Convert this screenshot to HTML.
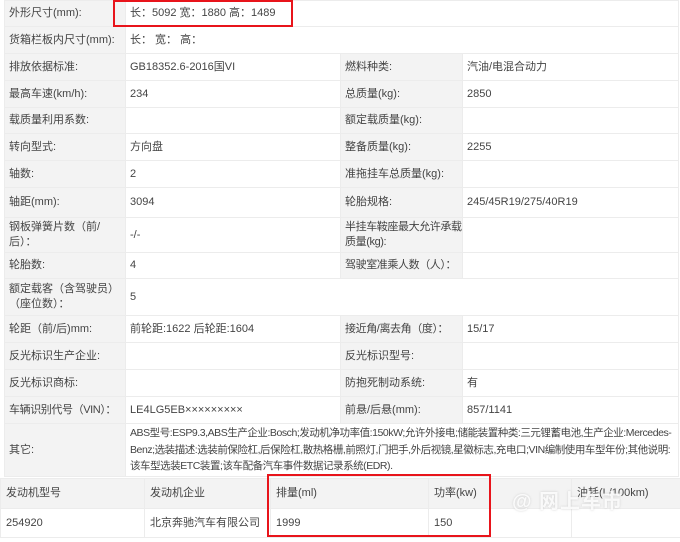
<!DOCTYPE html>
<html><head><meta charset="utf-8"><style>
*{margin:0;padding:0;box-sizing:border-box}
body{width:680px;height:542px;background:#fff;position:relative;overflow:hidden;font-family:"Liberation Sans","Noto Sans CJK SC",sans-serif;font-size:11px;color:#444}
table{border-collapse:collapse;table-layout:fixed;position:absolute}
td{border:1px solid #ececec;padding:0 4px;vertical-align:middle;line-height:15px;overflow:hidden;white-space:nowrap}
td.l{background:#f3f3f3}
.nw{letter-spacing:-0.4px}
#m{left:4px;top:0;width:674px}
#b{left:0;top:478px;width:680px}
#b td{padding-left:5px}
.rb{position:absolute;border:2.5px solid #e8141b}
.wm{position:absolute;left:512px;top:485px;font-size:20px;color:rgba(255,255,255,.85);font-weight:bold;letter-spacing:1px;text-shadow:0 0 2px rgba(180,180,180,.6)}
.oth{font-size:10.5px;line-height:16.5px;letter-spacing:-0.45px}
</style></head><body>
<table id="m">
<colgroup><col style="width:121px"><col style="width:215px"><col style="width:122px"><col style="width:216px"></colgroup>
<tr style="height:26px"><td class="l">外形尺寸(mm):</td><td colspan="3">长：5092 宽：1880 高：1489</td></tr>
<tr style="height:27px"><td class="l">货箱栏板内尺寸(mm):</td><td colspan="3">长：&nbsp;宽：&nbsp;高：</td></tr>
<tr style="height:27px"><td class="l">排放依据标准:</td><td>GB18352.6-2016国VI</td><td class="l">燃料种类:</td><td>汽油/电混合动力</td></tr>
<tr style="height:27px"><td class="l">最高车速(km/h):</td><td>234</td><td class="l">总质量(kg):</td><td>2850</td></tr>
<tr style="height:26px"><td class="l">载质量利用系数:</td><td></td><td class="l">额定载质量(kg):</td><td></td></tr>
<tr style="height:27px"><td class="l">转向型式:</td><td>方向盘</td><td class="l">整备质量(kg):</td><td>2255</td></tr>
<tr style="height:27px"><td class="l">轴数:</td><td>2</td><td class="l">准拖挂车总质量(kg):</td><td></td></tr>
<tr style="height:30px"><td class="l">轴距(mm):</td><td>3094</td><td class="l">轮胎规格:</td><td>245/45R19/275/40R19</td></tr>
<tr style="height:35px"><td class="l">钢板弹簧片数（前/<br>后）：</td><td>-/-</td><td class="l nw">半挂车鞍座最大允许承载<br>质量(kg):</td><td></td></tr>
<tr style="height:26px"><td class="l">轮胎数:</td><td>4</td><td class="l nw">驾驶室准乘人数（人）：</td><td></td></tr>
<tr style="height:37px"><td class="l">额定载客（含驾驶员）<br>（座位数）：</td><td colspan="3">5</td></tr>
<tr style="height:27px"><td class="l">轮距（前/后)mm:</td><td>前轮距:1622 后轮距:1604</td><td class="l nw">接近角/离去角（度）：</td><td>15/17</td></tr>
<tr style="height:27px"><td class="l">反光标识生产企业:</td><td></td><td class="l">反光标识型号:</td><td></td></tr>
<tr style="height:27px"><td class="l">反光标识商标:</td><td></td><td class="l">防抱死制动系统:</td><td>有</td></tr>
<tr style="height:27px"><td class="l nw">车辆识别代号（VIN）：</td><td>LE4LG5EB×××××××××</td><td class="l">前悬/后悬(mm):</td><td>857/1141</td></tr>
<tr style="height:53px"><td class="l">其它:</td><td colspan="3" class="oth">ABS型号:ESP9.3,ABS生产企业:Bosch;发动机净功率值:150kW;允许外接电;储能装置种类:三元锂蓄电池,生产企业:Mercedes-<br>Benz;选装描述:选装前保险杠,后保险杠,散热格栅,前照灯,门把手,外后视镜,星徽标志,充电口;VIN编制使用车型年份;其他说明:<br>该车型选装ETC装置;该车配备汽车事件数据记录系统(EDR).</td></tr>
</table>
<table id="b">
<colgroup><col style="width:144px"><col style="width:126px"><col style="width:158px"><col style="width:143px"><col style="width:109px"></colgroup>
<tr style="height:30px"><td class="l">发动机型号</td><td class="l">发动机企业</td><td class="l">排量(ml)</td><td class="l">功率(kw)</td><td class="l">油耗(L/100km)</td></tr>
<tr style="height:29px"><td>254920</td><td>北京奔驰汽车有限公司</td><td>1999</td><td>150</td><td></td></tr>
</table>
<div class="wm">@ 网上车市</div>
<div class="rb" style="left:113px;top:0;width:180px;height:27px"></div>
<div class="rb" style="left:267px;top:474px;width:224px;height:63px"></div>
</body></html>
